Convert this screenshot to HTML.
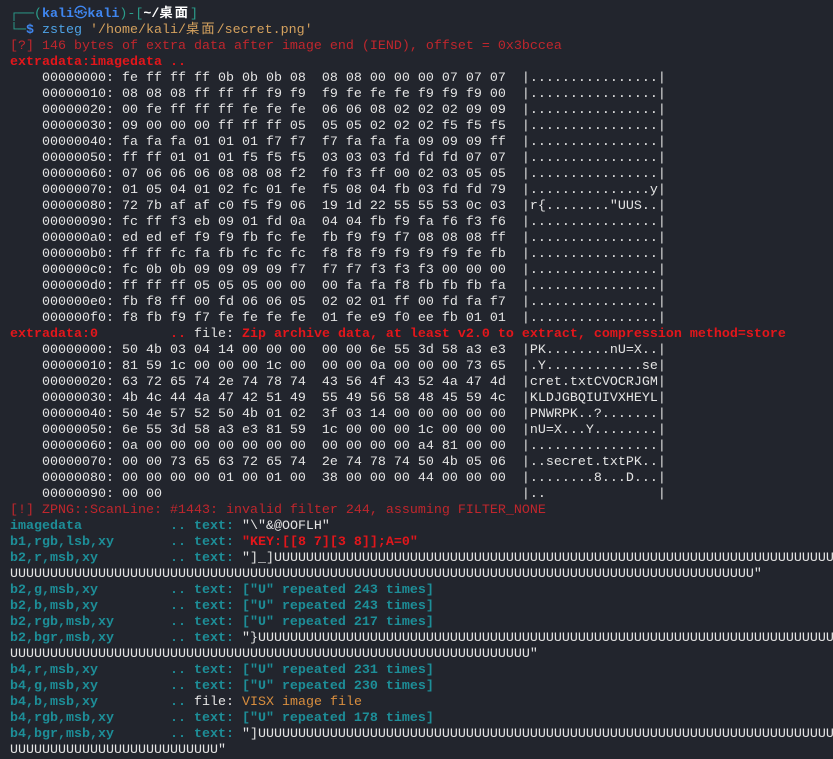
<!DOCTYPE html>
<html><head><meta charset="utf-8"><style>
html,body{margin:0;padding:0;background:#22252d;width:833px;height:759px;overflow:hidden}
pre{margin:0;padding:7px 0 0 10px;font-family:"Liberation Mono","Noto Sans CJK SC",monospace;font-size:13.33px;line-height:16px;color:#e4e4e4;white-space:pre;overflow:hidden;width:823px}
.t{color:#1d8e98;font-weight:bold}
.r{color:#e3161b;font-weight:bold}
.rn{color:#c0262d}
.o{color:#d98e3e}
.g{color:#2b9e8c}
.b{color:#3f86f0;font-weight:bold}
.w{font-weight:bold;color:#fff}
.z{color:#4ea3e6}
.p{color:#d4a15e}
.c{letter-spacing:2px}
</style></head><body><pre><span class="g">┌──(</span><span class="b">kali㉿kali</span><span class="g">)-[</span><span class="w">~/<span class="c">桌面</span></span><span class="g">]</span>
<span class="g">└─</span><span class="b">$</span> <span class="z">zsteg</span> <span class="p">'/home/kali/<span class="c">桌面</span>/secret.png'</span>
<span class="rn">[?] 146 bytes of extra data after image end (IEND), offset = 0x3bccea</span>
<span class="r">extradata:imagedata</span> <span class="r">..</span>
    00000000: fe ff ff ff 0b 0b 0b 08  08 08 00 00 00 07 07 07  |................|
    00000010: 08 08 08 ff ff ff f9 f9  f9 fe fe fe f9 f9 f9 00  |................|
    00000020: 00 fe ff ff ff fe fe fe  06 06 08 02 02 02 09 09  |................|
    00000030: 09 00 00 00 ff ff ff 05  05 05 02 02 02 f5 f5 f5  |................|
    00000040: fa fa fa 01 01 01 f7 f7  f7 fa fa fa 09 09 09 ff  |................|
    00000050: ff ff 01 01 01 f5 f5 f5  03 03 03 fd fd fd 07 07  |................|
    00000060: 07 06 06 06 08 08 08 f2  f0 f3 ff 00 02 03 05 05  |................|
    00000070: 01 05 04 01 02 fc 01 fe  f5 08 04 fb 03 fd fd 79  |...............y|
    00000080: 72 7b af af c0 f5 f9 06  19 1d 22 55 55 53 0c 03  |r{........"UUS..|
    00000090: fc ff f3 eb 09 01 fd 0a  04 04 fb f9 fa f6 f3 f6  |................|
    000000a0: ed ed ef f9 f9 fb fc fe  fb f9 f9 f7 08 08 08 ff  |................|
    000000b0: ff ff fc fa fb fc fc fc  f8 f8 f9 f9 f9 f9 fe fb  |................|
    000000c0: fc 0b 0b 09 09 09 09 f7  f7 f7 f3 f3 f3 00 00 00  |................|
    000000d0: ff ff ff 05 05 05 00 00  00 fa fa f8 fb fb fb fa  |................|
    000000e0: fb f8 ff 00 fd 06 06 05  02 02 01 ff 00 fd fa f7  |................|
    000000f0: f8 fb f9 f7 fe fe fe fe  01 fe e9 f0 ee fb 01 01  |................|
<span class="r">extradata:0</span>         <span class="r">..</span> file: <span class="r">Zip archive data, at least v2.0 to extract, compression method=store</span>
    00000000: 50 4b 03 04 14 00 00 00  00 00 6e 55 3d 58 a3 e3  |PK........nU=X..|
    00000010: 81 59 1c 00 00 00 1c 00  00 00 0a 00 00 00 73 65  |.Y............se|
    00000020: 63 72 65 74 2e 74 78 74  43 56 4f 43 52 4a 47 4d  |cret.txtCVOCRJGM|
    00000030: 4b 4c 44 4a 47 42 51 49  55 49 56 58 48 45 59 4c  |KLDJGBQIUIVXHEYL|
    00000040: 50 4e 57 52 50 4b 01 02  3f 03 14 00 00 00 00 00  |PNWRPK..?.......|
    00000050: 6e 55 3d 58 a3 e3 81 59  1c 00 00 00 1c 00 00 00  |nU=X...Y........|
    00000060: 0a 00 00 00 00 00 00 00  00 00 00 00 a4 81 00 00  |................|
    00000070: 00 00 73 65 63 72 65 74  2e 74 78 74 50 4b 05 06  |..secret.txtPK..|
    00000080: 00 00 00 00 01 00 01 00  38 00 00 00 44 00 00 00  |........8...D...|
    00000090: 00 00                                             |..              |
<span class="rn">[!] ZPNG::ScanLine: #1443: invalid filter 244, assuming FILTER_NONE</span>
<span class="t">imagedata           .. text:</span> "\"&amp;@OOFLH"
<span class="t">b1,rgb,lsb,xy       .. text:</span> <span class="r">"KEY:[[8 7][3 8]];A=0"</span>
<span class="t">b2,r,msb,xy         .. text:</span> "]_]UUUUUUUUUUUUUUUUUUUUUUUUUUUUUUUUUUUUUUUUUUUUUUUUUUUUUUUUUUUUUUUUUUUUUUUUUUUUUU
UUUUUUUUUUUUUUUUUUUUUUUUUUUUUUUUUUUUUUUUUUUUUUUUUUUUUUUUUUUUUUUUUUUUUUUUUUUUUUUUUUUUUUUUUUUUU"
<span class="t">b2,g,msb,xy         .. text: ["U" repeated 243 times]</span>
<span class="t">b2,b,msb,xy         .. text: ["U" repeated 243 times]</span>
<span class="t">b2,rgb,msb,xy       .. text: ["U" repeated 217 times]</span>
<span class="t">b2,bgr,msb,xy       .. text:</span> "}UUUUUUUUUUUUUUUUUUUUUUUUUUUUUUUUUUUUUUUUUUUUUUUUUUUUUUUUUUUUUUUUUUUUUUUUUUUUUUUU
UUUUUUUUUUUUUUUUUUUUUUUUUUUUUUUUUUUUUUUUUUUUUUUUUUUUUUUUUUUUUUUUU"
<span class="t">b4,r,msb,xy         .. text: ["U" repeated 231 times]</span>
<span class="t">b4,g,msb,xy         .. text: ["U" repeated 230 times]</span>
<span class="t">b4,b,msb,xy         ..</span> file: <span class="o">VISX image file</span>
<span class="t">b4,rgb,msb,xy       .. text: ["U" repeated 178 times]</span>
<span class="t">b4,bgr,msb,xy       .. text:</span> "]UUUUUUUUUUUUUUUUUUUUUUUUUUUUUUUUUUUUUUUUUUUUUUUUUUUUUUUUUUUUUUUUUUUUUUUUUUUUUUUU
UUUUUUUUUUUUUUUUUUUUUUUUUU"
</pre></body></html>
